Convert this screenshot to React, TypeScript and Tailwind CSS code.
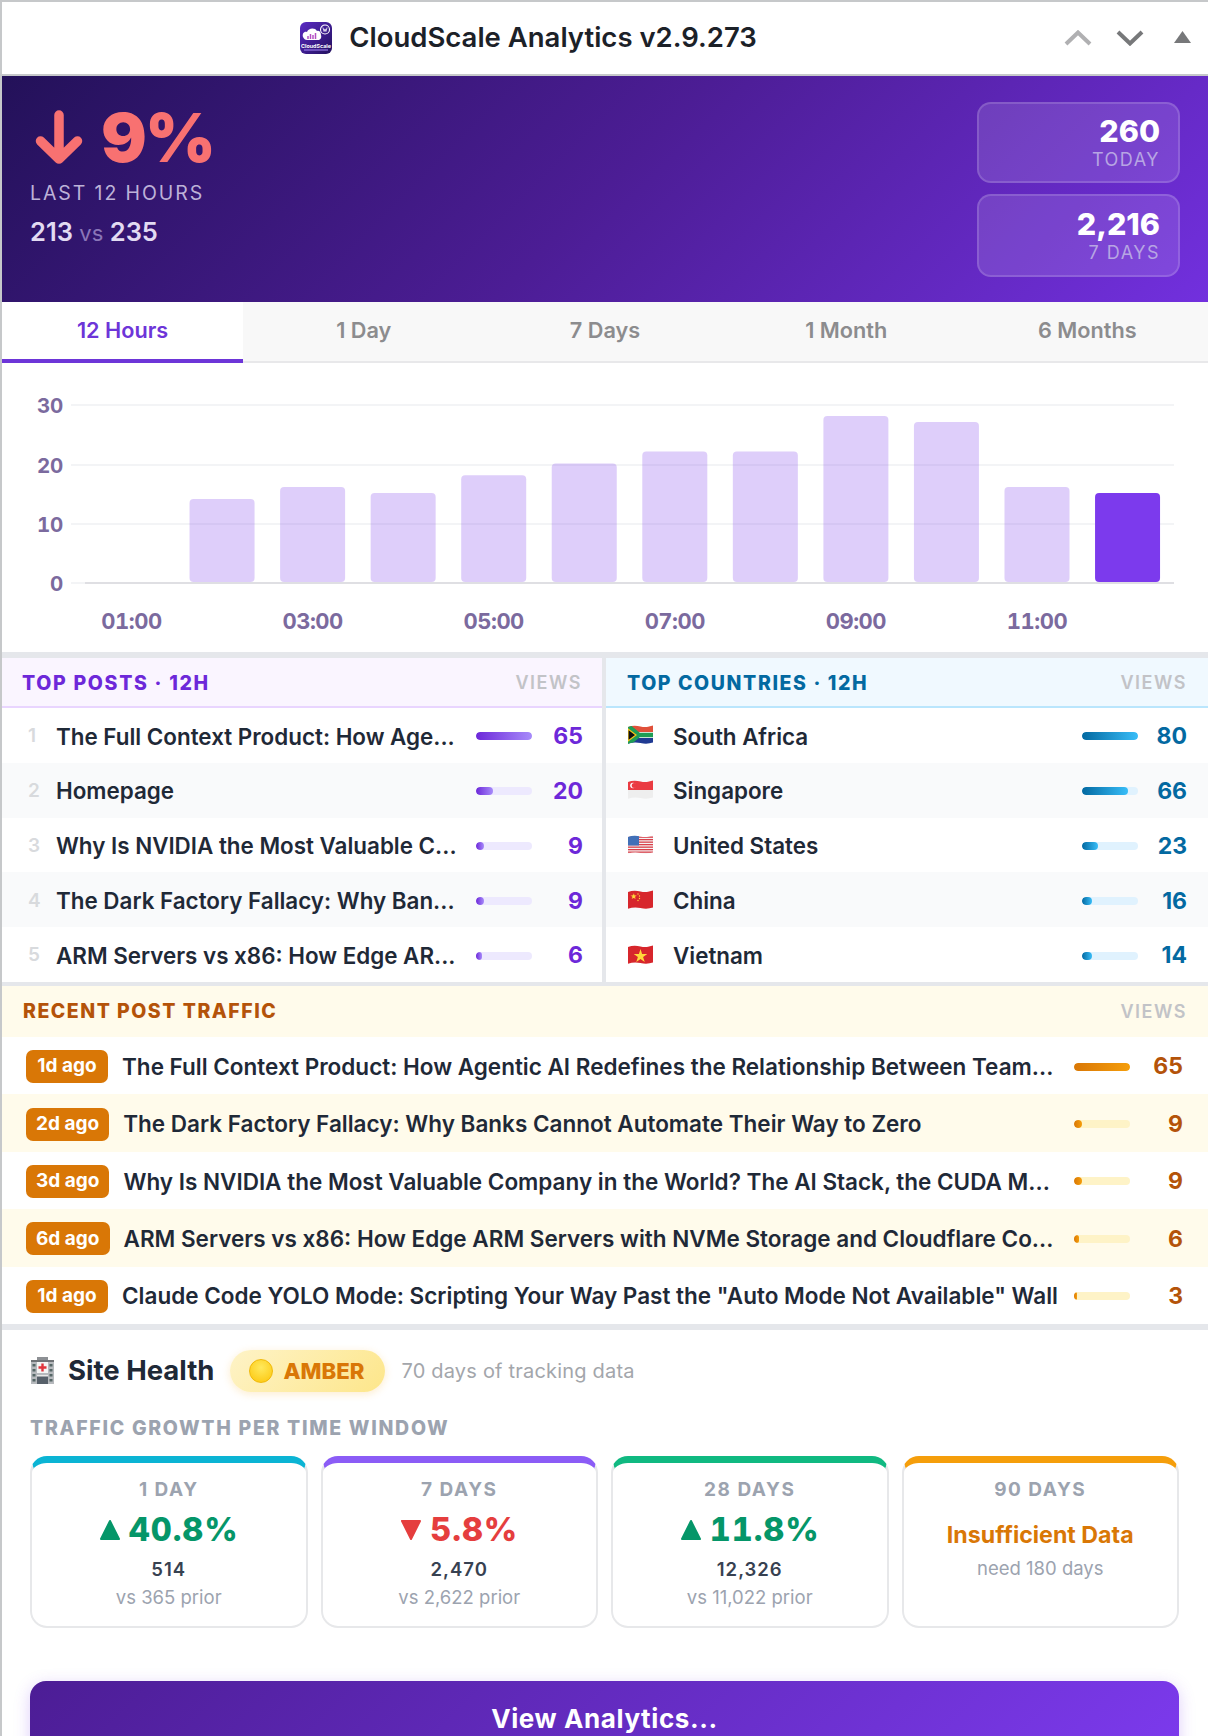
import React from "react";

const tabs = ["12 Hours", "1 Day", "7 Days", "1 Month", "6 Months"];

const bars = [0, 14, 16, 15, 18, 20, 22, 22, 28, 27, 16, 15];
const hourLabels = ["01:00", "03:00", "05:00", "07:00", "09:00", "11:00"];

const topPosts = [
  { title: "The Full Context Product: How Age...", views: 65, pct: 100 },
  { title: "Homepage", views: 20, pct: 31 },
  { title: "Why Is NVIDIA the Most Valuable C...", views: 9, pct: 14 },
  { title: "The Dark Factory Fallacy: Why Ban...", views: 9, pct: 14 },
  { title: "ARM Servers vs x86: How Edge AR...", views: 6, pct: 10 },
];

const countries = [
  { code: "za", name: "South Africa", views: 80, pct: 100 },
  { code: "sg", name: "Singapore", views: 66, pct: 82 },
  { code: "us", name: "United States", views: 23, pct: 29 },
  { code: "cn", name: "China", views: 16, pct: 18 },
  { code: "vn", name: "Vietnam", views: 14, pct: 18 },
];

const recent = [
  { age: "1d ago", title: "The Full Context Product: How Agentic AI Redefines the Relationship Between Team...", views: 65, pct: 100 },
  { age: "2d ago", title: "The Dark Factory Fallacy: Why Banks Cannot Automate Their Way to Zero", views: 9, pct: 14 },
  { age: "3d ago", title: "Why Is NVIDIA the Most Valuable Company in the World? The AI Stack, the CUDA M...", views: 9, pct: 14 },
  { age: "6d ago", title: "ARM Servers vs x86: How Edge ARM Servers with NVMe Storage and Cloudflare Co...", views: 6, pct: 9 },
  { age: "1d ago", title: 'Claude Code YOLO Mode: Scripting Your Way Past the "Auto Mode Not Available" Wall', views: 3, pct: 5 },
];

const growth = [
  { label: "1 DAY", dir: "up", pct: "40.8%", total: "514", prior: "vs 365 prior", top: "border-t-[#0bb4d4]" },
  { label: "7 DAYS", dir: "down", pct: "5.8%", total: "2,470", prior: "vs 2,622 prior", top: "border-t-[#8b5cf6]" },
  { label: "28 DAYS", dir: "up", pct: "11.8%", total: "12,326", prior: "vs 11,022 prior", top: "border-t-[#10b981]" },
  { label: "90 DAYS", dir: "none", pct: "", total: "", prior: "", top: "border-t-[#f59e0b]" },
];

const Logo = () => (
  <svg width="34" height="34" viewBox="0 0 34 34" className="shrink-0">
    <defs>
      <linearGradient id="logoBg" x1="0" y1="0" x2="1" y2="1">
        <stop offset="0" stopColor="#5b2bc4" />
        <stop offset="1" stopColor="#22105e" />
      </linearGradient>
    </defs>
    <rect x="1" y="1" width="32" height="32" rx="6" fill="url(#logoBg)" />
    <path d="M4 16c-1-3 1-6 4-5 1-4 8-5 10-1 2-1 4 1 4 4 1 3-1 5-3 5H8c-2 0-3-1-4-3z" fill="#fff" />
    <path d="M9 18v-3M11.5 18v-5M14 18v-4M16.5 18v-6" stroke="#b44fc4" strokeWidth="1.5" />
    <circle cx="26" cy="8.5" r="4.5" fill="none" stroke="#fff" strokeWidth="1.1" />
    <path d="M23.9 6.5l1.2 4 .9-2.6.9 2.6 1.2-4" fill="none" stroke="#fff" strokeWidth=".8" />
    <text x="17" y="26.5" textAnchor="middle" fontSize="5.4" fontWeight="700" fill="#fff">CloudScale</text>
    <rect x="5" y="28.5" width="24" height="1" fill="#a78bfa" />
  </svg>
);

const Flag = ({ code }: { code: string }) => (
  <svg width="25" height="20" viewBox="0 0 25 20" className="shrink-0 -mt-[2px]">
    <defs>
      <clipPath id={`flag-${code}`}>
        <path d="M0 2C4 .4 8 .4 12.5 1.4S21 1.8 25 .4V17.5c-4 1.3-8 1.5-12.5.5S4 17.3 0 18.8z" />
      </clipPath>
    </defs>
    <g clipPath={`url(#flag-${code})`}>
      {code === "za" && (
        <>
          <rect width="25" height="20" fill="#fff" />
          <rect width="25" height="7" fill="#e0503a" />
          <rect y="13" width="25" height="7" fill="#1f3a93" />
          <path d="M0 1l11 9h14M0 19l11-9" stroke="#1f9d55" strokeWidth="4.5" fill="none" />
          <path d="M0 4L8 10 0 16z" fill="#111" stroke="#f5c518" strokeWidth="1.2" />
        </>
      )}
      {code === "sg" && (
        <>
          <rect width="25" height="20" fill="#eeeeee" />
          <rect width="25" height="10" fill="#ea3b42" />
          <circle cx="5" cy="5.5" r="2.8" fill="#fff" />
          <circle cx="6.2" cy="5.5" r="2.5" fill="#ea3b42" />
        </>
      )}
      {code === "us" && (
        <>
          <rect width="25" height="20" fill="#f4f4f4" />
          {[1.5, 4, 6.5, 9, 11.5, 14, 16.5].map((y) => (
            <rect key={y} y={y} width="25" height="1.3" fill="#d9404a" />
          ))}
          <rect width="11" height="10.5" fill="#4170b8" />
        </>
      )}
      {code === "cn" && (
        <>
          <rect width="25" height="20" fill="#d7262c" />
          <text x="2" y="9" fontSize="7" fill="#ffd83b">★</text>
          <circle cx="10" cy="4" r=".7" fill="#ffd83b" />
          <circle cx="11.5" cy="6" r=".7" fill="#ffd83b" />
          <circle cx="11.5" cy="8.5" r=".7" fill="#ffd83b" />
          <circle cx="10" cy="10.5" r=".7" fill="#ffd83b" />
        </>
      )}
      {code === "vn" && (
        <>
          <rect width="25" height="20" fill="#d7262c" />
          <path d="M12.5 4l1.6 5h5.2l-4.2 3 1.6 5-4.2-3.1-4.2 3.1 1.6-5-4.200-3h5.200z" fill="#ffd83b" />
        </>
      )}
    </g>
  </svg>
);

const Hospital = () => (
  <svg width="25" height="27" viewBox="0 0 25 27" className="shrink-0">
    <rect x="7" y="0" width="11" height="3" fill="#8d9094" />
    <rect x="1" y="3" width="23" height="24" fill="#b6b9bd" />
    <rect x="1" y="3" width="23" height="2" fill="#6f7276" />
    <rect x="7" y="5" width="11" height="11" fill="#f4f4f4" />
    <path d="M12.5 6.5v8M8.5 10.5h8" stroke="#e0343c" strokeWidth="2.4" />
    {[7, 12, 17, 22].map((y) => (
      <g key={y}>
        <rect x="2.5" y={y} width="3" height="2.5" fill="#566" />
        <rect x="19.5" y={y} width="3" height="2.5" fill="#566" />
      </g>
    ))}
    <rect x="7" y="19" width="11" height="8" fill="#57606a" />
    <rect x="7" y="18" width="11" height="1.5" fill="#e8e8e8" />
  </svg>
);

const MiniBar = ({ pct, track, fill }: { pct: number; track: string; fill: string }) => (
  <div className={`w-[56px] h-2 rounded-full shrink-0 overflow-hidden ${track}`}>
    <div className={`h-full rounded-full ${fill}`} style={{ width: `${pct}%` }} />
  </div>
);

const Triangle = ({ up, color }: { up: boolean; color: string }) => (
  <svg width="22" height="24" viewBox="0 0 22 24" className="shrink-0">
    <path
      d={up ? "M11 3L20 21H2z" : "M2 3H20L11 21z"}
      fill={color}
      stroke={color}
      strokeWidth="2"
      strokeLinejoin="round"
    />
  </svg>
);

const Chart = () => (
  <svg width="1206" height="289" viewBox="0 0 1206 289" className="block tabular-nums">
    {[42, 102, 161].map((y) => (
      <line key={y} x1="69" x2="1172" y1={y} y2={y} stroke="#f3f4f6" strokeWidth="2" />
    ))}
    <line x1="69" x2="83" y1="220" y2="220" stroke="#f3f4f6" strokeWidth="2" />
    <line x1="83" x2="1172" y1="220" y2="220" stroke="#dfdfe3" strokeWidth="2" />
    {bars.map((v, i) =>
      v === 0 ? null : (
        <rect
          key={i}
          x={97 + i * 90.55}
          y={219 - v * 5.93}
          width="65"
          height={v * 5.93}
          rx="4"
          fill={i === bars.length - 1 ? "#7c3aed" : "rgba(124,58,237,0.25)"}
        />
      ),
    )}
    {[
      ["30", 42],
      ["20", 102],
      ["10", 161],
      ["0", 220],
    ].map(([label, y]) => (
      <text
        key={label}
        x="61"
        y={Number(y) + 8}
        textAnchor="end"
        fontSize="20.5"
        fontWeight="700"
        letterSpacing="-0.3"
        fill="#7b6a9e"
      >
        {label}
      </text>
    ))}
    {hourLabels.map((label, i) => (
      <text
        key={label}
        x={129.5 + i * 181.1}
        y="266"
        textAnchor="middle"
        fontSize="22"
        fontWeight="700"
        letterSpacing="-0.5"
        fill="#7b6a9e"
      >
        {label}
      </text>
    ))}
  </svg>
);

export default function App() {
  return (
    <div className="w-[1208px] h-[1736px] overflow-hidden bg-white border-l-2 border-t-2 border-[#c6c8ca] font-[Inter,sans-serif] text-[#1f2937]">
      {/* title bar */}
      <div className="relative h-[74px] flex items-center justify-center pr-[154px] border-b-2 border-[#c6c8ca]">
        <div className="flex items-center gap-[16px]">
          <Logo />
          <span className="text-[27.5px] leading-none font-semibold text-[#1c2128]">CloudScale Analytics v2.9.273</span>
        </div>
        <div className="absolute right-[17px] top-[28px] flex items-start gap-[24px]">
          <svg width="28" height="16" viewBox="0 0 28 16">
            <path d="M2 14L14 2.5 26 14" fill="none" stroke="#b0b0b2" strokeWidth="4" />
          </svg>
          <svg width="28" height="16" viewBox="0 0 28 16">
            <path d="M2 2l12 11.5L26 2" fill="none" stroke="#77787a" strokeWidth="4" />
          </svg>
          <svg width="17" height="12" viewBox="0 0 17 12" className="ml-[6px] mt-[1px]">
            <path d="M8.5 0L17 12H0z" fill="#77787a" />
          </svg>
        </div>
      </div>

      {/* hero */}
      <div className="h-[226px] flex justify-between bg-[linear-gradient(135deg,#231159_0%,#4c1d95_50%,#7230de_100%)] pt-[26px] pl-[28px] pr-[28px]">
        <div>
          <div className="flex items-center h-[70px] gap-[18px] pl-[5px]">
            <svg width="48" height="54" viewBox="0 0 48 54" className="shrink-0">
              <path d="M24 5V49M5.5 31L24 49 42.5 31" fill="none" stroke="#f87171" strokeWidth="9.5" strokeLinecap="round" strokeLinejoin="round" />
            </svg>
            <span className="text-[68px] leading-none font-black tracking-[-2px] text-[#f87171]">9%</span>
          </div>
          <div className="mt-[9px] h-[24px] text-[19.5px] leading-[24px] tracking-[1.9px] text-[#bdb2d8]">LAST 12 HOURS</div>
          <div className="mt-[12px] h-[30px] text-[25.5px] leading-[30px] font-semibold text-[#e2dbf2]">
            213 <span className="font-normal text-[22px] text-[#8a76b8]">vs</span> 235
          </div>
        </div>
        <div className="flex flex-col gap-[11px]">
          <div className="w-[203px] h-[81px] flex flex-col justify-center items-end pr-[18px] rounded-[14px] border-2 border-white/15 bg-white/12">
            <span className="text-[30.5px] leading-[34px] font-extrabold text-white">260</span>
            <span className="text-[18px] leading-[24px] tracking-[1.5px] text-[#b7a5e3]">TODAY</span>
          </div>
          <div className="w-[203px] h-[83px] flex flex-col justify-center items-end pr-[18px] rounded-[14px] border-2 border-white/15 bg-white/12">
            <span className="text-[30.5px] leading-[34px] font-extrabold text-white">2,216</span>
            <span className="text-[18px] leading-[24px] tracking-[1.5px] text-[#b7a5e3]">7 DAYS</span>
          </div>
        </div>
      </div>

      {/* tabs */}
      <div className="h-[61px] grid grid-cols-5 bg-[#f8f8f8] border-b-2 border-[#e8e8ea]">
        {tabs.map((t, i) => (
          <div
            key={t}
            className={
              i === 0
                ? "h-[61px] flex items-center justify-center bg-white border-b-[4px] border-[#6d35d8] text-[21.7px] font-semibold text-[#6d35d8]"
                : "h-[57px] flex items-center justify-center text-[21.7px] font-semibold text-[#8c8c8e]"
            }
          >
            {t}
          </div>
        ))}
      </div>

      <Chart />

      {/* top posts and countries */}
      <div className="flex flex-col border-t-[6px] border-[#e5e7eb]">
        <div className="flex">
          <div className="w-[600px] border-r-[4px] border-[#e5e7eb] box-content">
            <div className="h-[50px] flex items-center justify-between pl-[20px] pr-[20px] pt-[3px] bg-[#faf5ff] border-b-2 border-[#e9d5ff]">
              <span className="text-[19.5px] font-extrabold tracking-[1.7px] text-[#6d28d9]">TOP POSTS · 12H</span>
              <span className="text-[18px] font-semibold tracking-[1.5px] text-[#c2c3c7] -mt-[3px]">VIEWS</span>
            </div>
            {topPosts.map((p, i) => (
              <div
                key={p.title}
                className={`h-[54.8px] flex items-center pr-[19px] pt-[2px] ${i % 2 === 1 ? "bg-[#f9fafb]" : "bg-white"}`}
              >
                <span className="w-[54px] pl-[26px] text-[19px] font-semibold text-[#d8dadd]">{i + 1}</span>
                <span className="flex-1 text-[22.4px] font-semibold text-[#1f2937] whitespace-nowrap">{p.title}</span>
                <MiniBar pct={p.pct} track="bg-[#ede9fe]" fill="bg-[linear-gradient(90deg,#6d28d9,#a78bfa)]" />
                <span className="w-[51px] text-right text-[23px] font-bold text-[#6d28d9]">{p.views}</span>
              </div>
            ))}
          </div>
          <div className="flex-1">
            <div className="h-[50px] flex items-center justify-between pl-[21px] pr-[21px] pt-[3px] bg-[#f0f9ff] border-b-2 border-[#bae6fd]">
              <span className="text-[19.5px] font-extrabold tracking-[1.6px] text-[#0369a1]">TOP COUNTRIES · 12H</span>
              <span className="text-[18px] font-semibold tracking-[1.5px] text-[#c2c3c7] -mt-[3px]">VIEWS</span>
            </div>
            {countries.map((c, i) => (
              <div
                key={c.code}
                className={`h-[54.8px] flex items-center pl-[22px] pr-[21px] pt-[2px] ${i % 2 === 1 ? "bg-[#f9fafb]" : "bg-white"}`}
              >
                <Flag code={c.code} />
                <span className="flex-1 pl-[20px] text-[22.4px] font-semibold text-[#1f2937] whitespace-nowrap">{c.name}</span>
                <MiniBar pct={c.pct} track="bg-[#e0f2fe]" fill="bg-[linear-gradient(90deg,#0369a1,#38bdf8)]" />
                <span className="w-[49px] text-right text-[23px] font-bold text-[#0369a1]">{c.views}</span>
              </div>
            ))}
          </div>
        </div>
      </div>

      {/* recent post traffic */}
      <div className="border-t-[4px] border-[#e5e7eb]">
        <div className="h-[51px] flex items-center justify-between pl-[21px] pr-[21px] bg-[#fffbeb]">
          <span className="text-[19.5px] font-extrabold tracking-[1.5px] text-[#b45309]">RECENT POST TRAFFIC</span>
          <span className="text-[18px] font-semibold tracking-[1.5px] text-[#c2c3c7]">VIEWS</span>
        </div>
        {recent.map((r, i) => (
          <div
            key={r.title}
            className={`h-[57.4px] flex items-center pl-[24px] pr-[25px] pt-[2px] ${i % 2 === 1 ? "bg-[#fffbeb]" : "bg-white"}`}
          >
            <span className="h-[33px] min-w-[82px] flex items-center justify-center px-[10px] rounded-[7px] bg-[#d97706] text-[19px] font-bold text-white shrink-0">
              {r.age}
            </span>
            <span className="flex-1 pl-[14px] text-[22.5px] font-semibold text-[#1f2937] whitespace-nowrap overflow-hidden">{r.title}</span>
            <MiniBar pct={r.pct} track="bg-[#fef3c7]" fill="bg-[linear-gradient(90deg,#d97706,#f59e0b)]" />
            <span className="w-[53px] text-right text-[23px] font-bold text-[#b45309]">{r.views}</span>
          </div>
        ))}
      </div>

      {/* site health */}
      <div className="border-t-[6px] border-[#e5e7eb] pl-[28px] pr-[29px]">
        <div className="flex items-center h-[42px] mt-[20px]">
          <Hospital />
          <span className="ml-[13px] text-[27.5px] font-bold text-[#1f2937]">Site Health</span>
          <div className="ml-[16px] h-[42px] w-[155px] flex items-center pl-[19px] gap-[10px] rounded-full bg-[linear-gradient(135deg,#fef3c7,#fde68a)] shadow-[0_2px_8px_rgba(245,158,11,0.2)]">
            <span className="w-[24px] h-[24px] rounded-full bg-[radial-gradient(circle_at_50%_35%,#ffe95c,#fcc50a)] border border-[#f0b90a]" />
            <span className="text-[22.2px] font-extrabold text-[#d97706]">AMBER</span>
          </div>
          <span className="ml-[16px] text-[20px] tracking-[0.2px] text-[#a3a6ab]">70 days of tracking data</span>
        </div>
        <div className="mt-[24px] text-[19.5px] leading-[24px] font-extrabold tracking-[1.7px] text-[#9ca3af]">TRAFFIC GROWTH PER TIME WINDOW</div>
        <div className="mt-[16px] grid grid-cols-4 gap-[13px]">
          {growth.map((g) => (
            <div
              key={g.label}
              className={`h-[172px] flex flex-col items-center rounded-[17px] border-2 border-[#e7e8ea] border-t-[7px] ${g.top} pt-[15px]`}
            >
              <span className="text-[19px] leading-[24px] font-bold tracking-[1.5px] text-[#9ca3af]">{g.label}</span>
              {g.dir === "none" ? (
                <>
                  <span className="mt-[18px] text-[23.2px] leading-[30px] font-bold text-[#d97706]">Insufficient Data</span>
                  <span className="mt-[5px] text-[18.5px] leading-[26px] text-[#9ca3af]">need 180 days</span>
                </>
              ) : (
                <>
                  <div className={`mt-[6px] flex items-center gap-[8px] ${g.dir === "up" ? "text-[#059669]" : "text-[#e53e3e]"}`}>
                    <Triangle up={g.dir === "up"} color={g.dir === "up" ? "#059669" : "#e53e3e"} />
                    <span className="text-[32.5px] leading-[44px] font-extrabold tracking-[1px] tabular-nums">{g.pct}</span>
                  </div>
                  <span className="mt-[4px] text-[18.5px] leading-[26px] font-semibold tracking-[1px] text-[#374151]">{g.total}</span>
                  <span className="mt-[2px] text-[18.5px] leading-[26px] text-[#9ca3af]">{g.prior}</span>
                </>
              )}
            </div>
          ))}
        </div>
        <div className="mt-[53px] h-[76px] flex items-center justify-center rounded-[16px] bg-[linear-gradient(135deg,#4c1d95,#7c3aed)] shadow-[0_4px_16px_rgba(124,58,237,0.25)] text-[26px] font-bold tracking-[0.6px] text-white">
          View Analytics...
        </div>
      </div>
    </div>
  );
}
